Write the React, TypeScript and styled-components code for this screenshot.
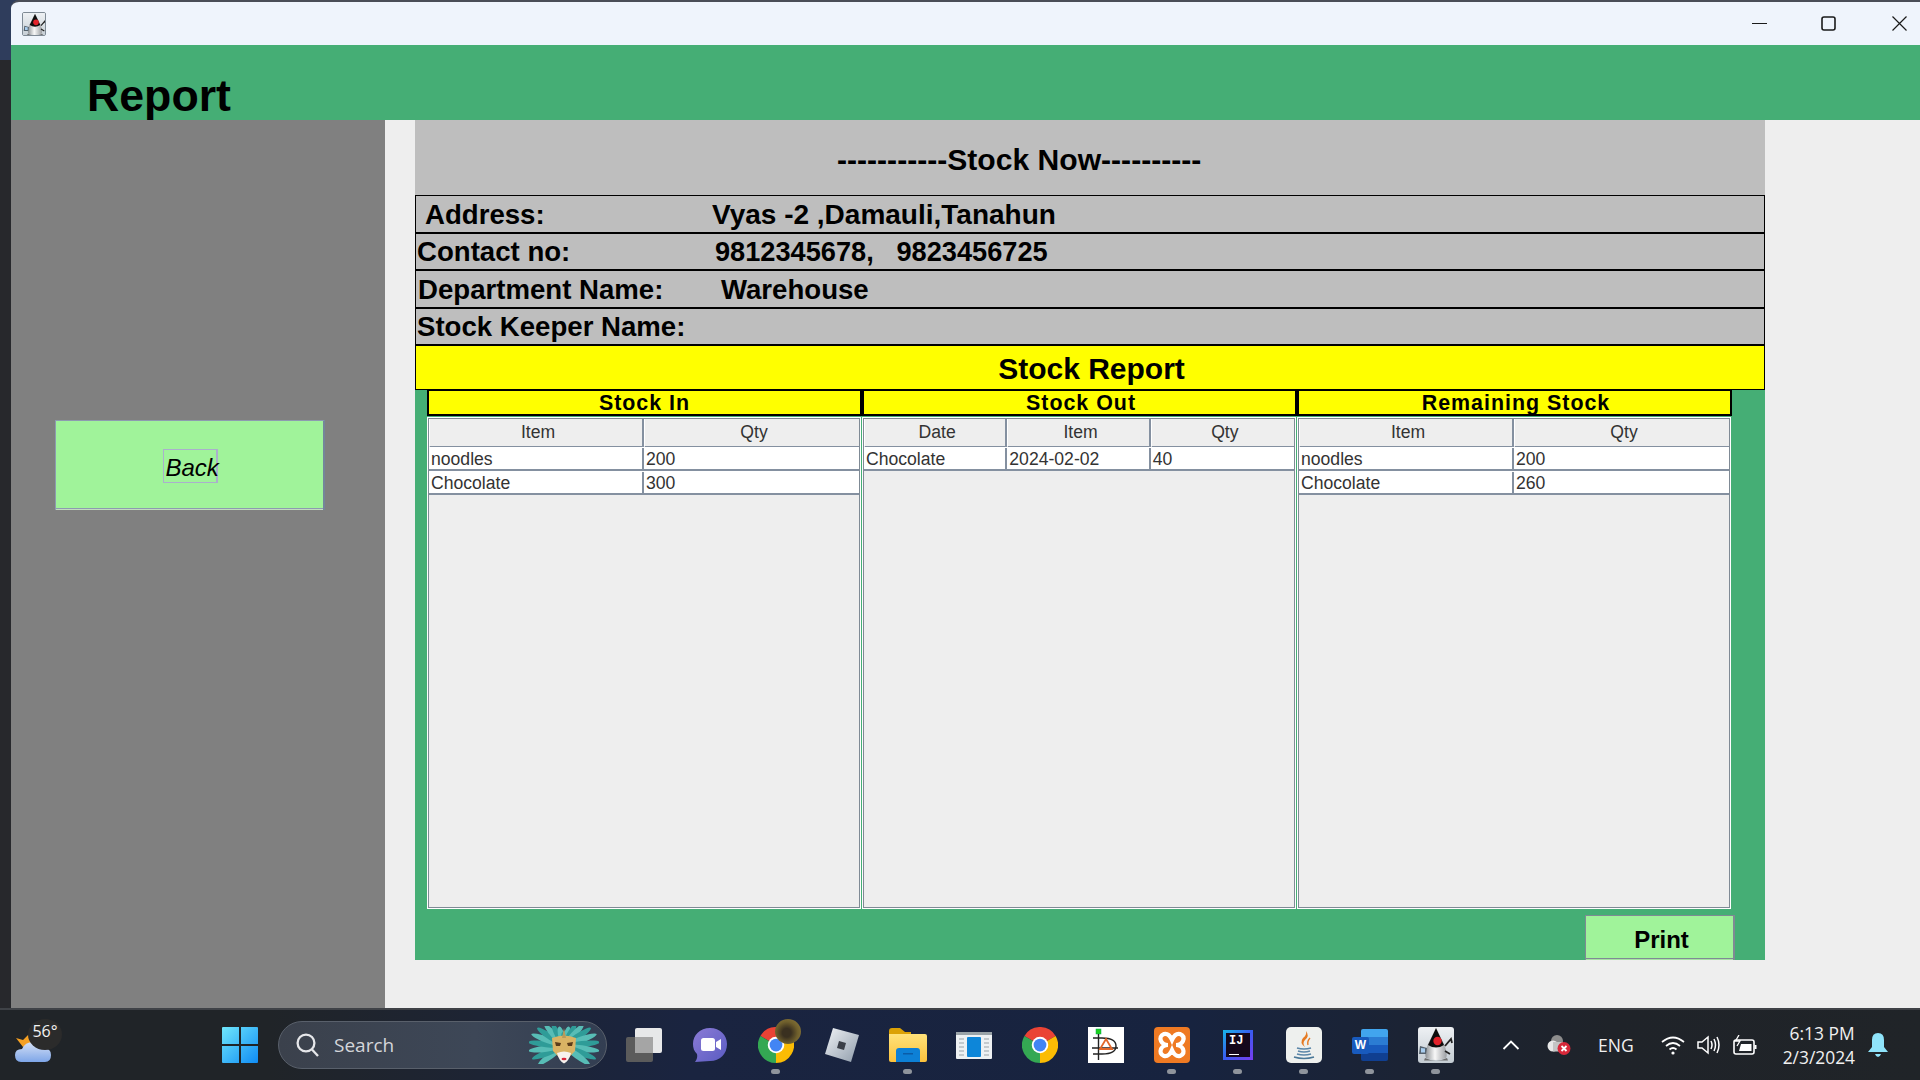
import React from "react";
import styled, { createGlobalStyle } from "styled-components";

const Global = createGlobalStyle`
  html, body { margin: 0; padding: 0; overflow: hidden; background: #26272b; }
  #root { width: 1920px; height: 1080px; }
  * { box-sizing: border-box; }
`;

const Screen = styled.div`
  width: 1920px; height: 1080px; display: flex; flex-direction: column;
  font-family: "Liberation Sans", Arial, sans-serif; overflow: hidden;
`;
const Desktop = styled.div`
  height: 1008px; padding-left: 11px; display: flex;
  background: linear-gradient(#2f3d5c 0 60px, #27282c 60px);
`;
const Window = styled.div`
  flex: 1; display: flex; flex-direction: column; min-width: 0;
  border-top: 2px solid #4a4d57; border-top-left-radius: 8px; overflow: hidden;
`;
const TitleBar = styled.div`
  height: 43px; flex: none; background: #eff4fc; display: flex; align-items: center;
  padding-left: 11px; padding-bottom: 0;
`;
const TitleIcon = styled.div`
  width: 24px; height: 24px; border: 1px solid #7f8a95; border-radius: 2px; overflow: hidden;
`;
const Controls = styled.div`
  margin-left: auto; display: flex; align-items: center; padding-right: 13px; padding-bottom: 1px;
`;
const ControlIcon = styled.svg<{ $gap: number }>`
  width: 15px; height: 15px; margin-left: ${p => p.$gap}px; display: block;
  stroke: #1a1a1a; fill: none; stroke-width: 1.2;
`;
const Header = styled.header`
  height: 75px; flex: none; background: #45ae75; overflow: hidden; padding: 25px 0 0 76px;
`;
const PageTitle = styled.h1`
  margin: 0; font-size: 44.7px; line-height: 51px; font-weight: 700; color: #000;
`;
const Body = styled.div`
  flex: 1; display: flex; background: #eeeeee; min-height: 0;
`;
const Sidebar = styled.aside`
  width: 374px; flex: none; background: #808080; padding: 300px 0 0 44px;
`;
const BackButton = styled.button`
  width: 270px; height: 90px; padding: 0; background: #a0f39a; display: flex;
  align-items: center; justify-content: center; cursor: pointer;
  border: 1px solid #8d9bb0; border-right: 2px solid #75859a; border-bottom: 0;
  box-shadow: inset 0 -1px 0 #c2dcbf, inset 0 -2px 0 #8d9bb0;
`;
const BackLabel = styled.span`
  display: block; width: 55px; height: 34px; border: 1px solid #aab0cc; border-right-width: 2px;
  font: italic 400 24px/35px "Liberation Sans", Arial, sans-serif; color: #000;
  padding-left: 2px; white-space: nowrap; margin-left: 1px; margin-bottom: 0;
`;
const Content = styled.main`
  flex: 1; padding-left: 30px;
`;
const Panel = styled.section`
  width: 1350px; height: 840px; background: #45ae75; display: flex; flex-direction: column;
`;
const PanelTitle = styled.div`
  height: 75px; background: #bebebe; padding: 23px 0 0 422px;
  font-size: 30.1px; line-height: 34px; font-weight: 700; color: #000; white-space: nowrap;
`;
const InfoRow = styled.div`
  height: 37.5px; border: 1px solid #000; background: #bebebe; display: flex; align-items: center;
  padding-top: 2px; font-size: 27.6px; font-weight: 700; color: #000; white-space: nowrap;
`;
const InfoLabel = styled.span<{ $pad: number; $width: number }>`
  width: ${p => p.$width}px; padding-left: ${p => p.$pad}px; flex: none;
`;
const InfoValue = styled.span<{ $size: number }>`
  font-size: ${p => p.$size}px;
`;
const ReportBar = styled.div`
  height: 45px; border: 1px solid #000; background: #ffff00; text-align: center; padding-left: 3px;
  font-size: 30px; line-height: 46px; font-weight: 700; color: #000;
`;
const StockGrid = styled.div`
  height: 520px; margin: 0 33px 0 12px; display: grid; grid-template-columns: repeat(3, 435px);
`;
const StockColumn = styled.div`
  display: flex; flex-direction: column; min-height: 0;
`;
const ColumnHead = styled.div<{ $nudge: number }>`
  height: 26px; flex: none; background: #ffff00; border: 2px solid #000; border-top-width: 1px;
  padding-left: ${p => p.$nudge}px; margin-right: 0;
  text-align: center; font-size: 21.4px; line-height: 24px; font-weight: 700; letter-spacing: 1px; color: #000;
`;
const TableBox = styled.div`
  flex: 1; margin: 2px 2px 2px 1px; background: #eeeeee; border: 1px solid #7f8a95;
  box-shadow: 0 0 0 1px #fff; display: flex; flex-direction: column;
`;
const HeadRow = styled.div<{ $cols: number }>`
  height: 28px; flex: none; display: grid; grid-template-columns: repeat(${p => p.$cols}, 1fr);
`;
const HeadCell = styled.div`
  text-align: center; font-size: 17.6px; line-height: 27px; color: #333; padding-left: 4px;
  border-bottom: 2px solid #8490a0; border-right: 2px solid #8490a0; border-left: 1px solid #fff;
  &:last-child { border-right: 0; }
`;
const DataRow = styled.div<{ $cols: number }>`
  height: 24px; flex: none; display: grid; grid-template-columns: repeat(${p => p.$cols}, 1fr);
  background: #fff; border-top: 1px solid #fff; border-bottom: 2px solid #8490a0;
`;
const DataCell = styled.div`
  padding-left: 2px; font-size: 17.6px; line-height: 23px; color: #333; white-space: nowrap;
  border-right: 2px solid #8490a0;
  &:last-child { border-right: 0; }
`;
const Footer = styled.div`
  flex: 1; display: flex; justify-content: flex-end; padding: 5px 30px 0 0;
`;
const PrintButton = styled.button`
  width: 150px; height: 45px; background: #a0f39a; padding: 4px 0 0 4px; cursor: pointer;
  border: 1px solid #7f8a95; border-right-width: 2px; border-bottom: 0;
  box-shadow: inset 0 -1px 0 #a8e0a4, inset 0 -2px 0 #7f8a95;
  font: 700 24px/30px "Liberation Sans", Arial, sans-serif; color: #000;
`;

const Taskbar = styled.footer`
  height: 72px; flex: none; display: flex; align-items: center; position: relative;
  border-top: 2px solid #3f4247;
  background: linear-gradient(90deg, #202428 0%, #202428 14%, #1a2440 36%, #17233f 62%, #1f2329 84%, #202428 100%);
`;
const WeatherBlock = styled.div`
  width: 207px; flex: none; padding-left: 15px; position: relative; display: flex; align-items: center;
`;
const WeatherBadge = styled.span`
  position: absolute; left: 28px; top: -8px; width: 34px; height: 31px; border-radius: 50%;
  background: #2b2b2b; color: #f2f2f2; text-align: center;
  font: 400 16px/24px "Open Sans", sans-serif;
`;
const AppSlot = styled.div<{ $running?: boolean }>`
  width: 66px; height: 70px; flex: none; display: flex; align-items: center; justify-content: center;
  position: relative;
  ${p => p.$running ? `&::after { content: ""; position: absolute; left: 28px; bottom: 6px; width: 9px; height: 5px; border-radius: 3px; background: #8f949c; }` : ""}
`;
const SearchBox = styled.div`
  width: 329px; height: 48px; flex: none; margin: 0 4px 0 5px; border-radius: 24px;
  background: linear-gradient(90deg, #3b414c, #3d4757 60%, #333e52);
  border: 1px solid #59606b; display: flex; align-items: center; padding-left: 17px;
`;
const SearchText = styled.span`
  margin-left: 14px; font: 400 19px/24px "Open Sans", sans-serif; color: #d4d6da;
`;
const SearchArt = styled.div`
  margin-left: auto; margin-right: 7px; display: flex;
`;
const Avatar = styled.span`
  position: absolute; left: 32px; top: 9px; width: 26px; height: 25px; border-radius: 50%;
  background: radial-gradient(circle at 45% 55%, #3a3020 0 22%, #6f5f2c 55%, #94803f 100%);
`;
const TrayItem = styled.div<{ $gap: number }>`
  margin-left: ${p => p.$gap}px; flex: none; display: flex; align-items: center;
`;
const TrayText = styled.span`
  font: 400 17.5px/24px "Open Sans", sans-serif; color: #f0f0f0;
`;
const Clock = styled.div`
  width: 72px; text-align: right; font: 400 17.4px/24px "Open Sans", sans-serif; color: #f0f0f0; white-space: nowrap;
`;

const Duke: React.FC<{ size: number }> = ({ size }) => (
  <svg width={size} height={size} viewBox="0 0 36 36" style={{ display: "block", borderRadius: size > 30 ? 3 : 0 }}>
    <defs>
      <linearGradient id={`dk${size}`} x1="0" y1="0" x2="0" y2="1">
        <stop offset="0" stopColor="#eef1f4" /><stop offset="1" stopColor="#c4ccd3" />
      </linearGradient>
      <linearGradient id={`db${size}`} x1="0" y1="0" x2="1" y2="0">
        <stop offset="0" stopColor="#8d9195" /><stop offset=".45" stopColor="#f8f8f8" /><stop offset="1" stopColor="#9a9da1" />
      </linearGradient>
    </defs>
    <rect width="36" height="36" fill={`url(#dk${size})`} />
    <path d="M18 1 L10 17 Q6 27 8 31 Q18 35 28 31 Q30 27 26 17 Z" fill={`url(#db${size})`} />
    <path d="M18 1 L10 18 Q18 23 26 18 Z" fill="#0e0e0e" />
    <circle cx="19.5" cy="14" r="4.2" fill="#e3222a" />
    <path d="M9 21 L2 19 L1 27 L8 27 Z" fill="#56636f" />
    <path d="M3 21 L7 21.5 L7 25.5 L3 25.5 Z" fill="#a9cdee" />
    <path d="M27 19 L33 12 L34 16 M27 24 L32 27" stroke="#222" strokeWidth="1.8" fill="none" />
    <path d="M7 31 Q18 36 29 31 L30 33.5 L6 33.5 Z" fill="#6d6d6d" />
  </svg>
);

const WeatherIcon = () => (
  <svg width="36" height="36" viewBox="0 0 36 36" style={{ display: "block" }}>
    <defs>
      <linearGradient id="cloud" x1="0" y1="0" x2="0" y2="1">
        <stop offset="0" stopColor="#d5e0f6" /><stop offset="1" stopColor="#7ea6e8" />
      </linearGradient>
    </defs>
    <path d="M1 11 L8 13 L14 7 L16 16 L8 20 Z" fill="#f5a023" />
    <path d="M6 35 Q0 35 0 28 Q0 22 7 22 Q10 15 18 15 Q26 15 28 21 Q36 21 36 28 Q36 35 30 35 Z" fill="url(#cloud)" />
  </svg>
);

const StartIcon = () => (
  <svg width="36" height="36" viewBox="0 0 36 36" style={{ display: "block" }}>
    <defs>
      <linearGradient id="win" x1="0" y1="0" x2="1" y2="1">
        <stop offset="0" stopColor="#6fe6fb" /><stop offset="1" stopColor="#0f8cf5" />
      </linearGradient>
    </defs>
    <path d="M1 0H17V17H0V1a1 1 0 0 1 1-1ZM19 0H35a1 1 0 0 1 1 1V17H19ZM0 19H17V36H1a1 1 0 0 1-1-1ZM19 19H36V35a1 1 0 0 1-1 1H19Z" fill="url(#win)" />
  </svg>
);

const SearchGlyph = () => (
  <svg width="24" height="26" viewBox="0 0 24 26" fill="none" stroke="#e6e7ea" strokeWidth="2.3" style={{ display: "block" }}>
    <circle cx="10" cy="11" r="8.4" /><path d="M16 17.5 L22 24" />
  </svg>
);

const feathers = Array.from({ length: 19 }, (_, i) => -126 + i * 14);

const MaskArt = () => (
  <svg width="70" height="38" viewBox="0 0 70 38" style={{ display: "block" }}>
    {feathers.map((a, i) => {
      const len = 13 + 21 * Math.abs(Math.sin((a * Math.PI) / 180));
      return (
        <ellipse key={a} cx="35" cy={20 - len / 2 - 1} rx="3.2" ry={len / 2 + 1}
          fill={i % 2 ? "#2f9c98" : "#58bdb6"} transform={`rotate(${a} 35 20)`} />
      );
    })}
    <path d="M23 12 Q35 7 47 12 L46 25 Q41 30 35 37 Q29 30 24 25 Z" fill="#d9b364" />
    <path d="M26 16 L32 17 L31 20 L27 20 Z M44 16 L38 17 L39 20 L43 20 Z" fill="#5b3c1a" />
    <path d="M28 27 Q35 24 42 27 Q40 35 35 37.5 Q30 35 28 27 Z" fill="#f6f2ee" />
    <ellipse cx="35" cy="33" rx="2.5" ry="1.2" fill="#d8263a" />
    <path d="M33 12 L35 2 L37 12 Z" fill="#b89a5a" />
  </svg>
);

const TaskViewIcon = () => (
  <svg width="36" height="36" viewBox="0 0 36 36" style={{ display: "block" }}>
    <rect x="0" y="10" width="27" height="25" rx="2" fill="#5b5b5b" />
    <rect x="9" y="1" width="27" height="25" rx="2" fill="#f4f4f4" opacity=".94" />
    <rect x="9" y="10" width="18" height="16" fill="#a5a5a5" />
  </svg>
);

const TeamsIcon = () => (
  <svg width="36" height="36" viewBox="0 0 36 36" style={{ display: "block" }}>
    <defs>
      <linearGradient id="tm" x1="0" y1="0" x2="1" y2="1">
        <stop offset="0" stopColor="#8b7bd6" /><stop offset="1" stopColor="#5a5cc2" />
      </linearGradient>
    </defs>
    <path d="M18 1 C28 1 35 8 35 17 C35 27 28 34 18 34 L3 35 Q6 31 5 27 C2 24 1 21 1 17 C1 8 8 1 18 1 Z" fill="url(#tm)" />
    <rect x="9" y="11" width="14" height="13" rx="2.5" fill="#fff" />
    <path d="M24 15 L29 12 V23 L24 20 Z" fill="#fff" />
  </svg>
);

const ChromeIcon = () => (
  <svg width="36" height="36" viewBox="0 0 48 48" style={{ display: "block" }}>
    <path d="M24 24 L3.2 12 A24 24 0 0 1 44.8 12 Z" fill="#ea4335" />
    <path d="M24 24 L44.8 12 A24 24 0 0 1 24 48 Z" fill="#fbbc04" />
    <path d="M24 24 L24 48 A24 24 0 0 1 3.2 12 Z" fill="#34a853" />
    <circle cx="24" cy="24" r="11" fill="#fff" />
    <circle cx="24" cy="24" r="8.5" fill="#4285f4" />
  </svg>
);

const RobloxIcon = () => (
  <svg width="36" height="36" viewBox="0 0 36 36" style={{ display: "block" }}>
    <defs>
      <linearGradient id="rb" x1="0" y1="0" x2="1" y2="1">
        <stop offset="0" stopColor="#f0f3f6" /><stop offset="1" stopColor="#8f9cab" />
      </linearGradient>
    </defs>
    <path d="M9 1 L35 8 L27 35 L1 27 Z" fill="url(#rb)" />
    <path d="M15 14 L22 16 L20 23 L13 21 Z" fill="#3a3f48" />
  </svg>
);

const FilesIcon = () => (
  <svg width="38" height="34" viewBox="0 0 38 34" style={{ display: "block" }}>
    <defs>
      <linearGradient id="fd" x1="0" y1="0" x2="0" y2="1">
        <stop offset="0" stopColor="#ffe27a" /><stop offset="1" stopColor="#fcc23c" />
      </linearGradient>
    </defs>
    <path d="M0 3 Q0 0 3 0 H11 L16 4 H22 V10 H0 Z" fill="#dba106" />
    <path d="M0 6 H36 Q38 6 38 8 V32 Q38 34 36 34 H2 Q0 34 0 32 Z" fill="url(#fd)" />
    <path d="M7 34 V23 Q7 20 10 20 H28 Q31 20 31 23 V34 Z" fill="#0d80d6" />
    <rect x="14" y="25" width="10" height="1.5" fill="#0a5ca8" />
  </svg>
);

const StoreWindowIcon = () => (
  <svg width="36" height="27" viewBox="0 0 36 27" style={{ display: "block" }}>
    <rect width="36" height="27" rx="1" fill="#eef1f3" />
    <rect width="36" height="3" fill="#9aa3a8" />
    <rect x="11" y="5" width="14" height="20" rx="1" fill="#0d86d9" />
    {[6, 10, 14, 18, 22].map(y => (
      <g key={y}>
        <rect x="3" y={y} width="5" height="2" fill="#c4cace" />
        <rect x="28" y={y} width="5" height="2" fill="#c4cace" />
      </g>
    ))}
  </svg>
);

const DesignIcon = () => (
  <svg width="36" height="36" viewBox="0 0 36 36" style={{ display: "block" }}>
    <rect width="36" height="36" fill="#fff" />
    <rect x="8" y="2" width="5" height="5" fill="#1ed01e" stroke="#0a5" strokeWidth=".5" />
    <path d="M10.5 7 V33 M5 11 H14 Q28 11 28 19 Q28 27 14 27 H5 M4 21 H30" fill="none" stroke="#222" strokeWidth="1.4" />
    <path d="M18 12 L24 22 H12 Z" fill="none" stroke="#e2682a" strokeWidth="1.8" />
  </svg>
);

const XamppIcon = () => (
  <svg width="36" height="36" viewBox="0 0 36 36" style={{ display: "block" }}>
    <rect width="36" height="36" rx="4" fill="#ef7a23" />
    <path d="M18 13 Q15 6 10 7 Q5 9 7 14 Q9 18 14 18 Q9 18 7 22 Q5 27 10 29 Q15 30 18 23 Q21 30 26 29 Q31 27 29 22 Q27 18 22 18 Q27 18 29 14 Q31 9 26 7 Q21 6 18 13 Z" fill="none" stroke="#fff" strokeWidth="4.2" />
  </svg>
);

const IdeaBox = styled.div`
  width: 30px; height: 30px; padding: 3px; background: linear-gradient(135deg, #17b7e8, #3a5bf0 50%, #7a3cf0);
  display: flex;
`;
const IdeaInner = styled.div`
  flex: 1; background: #14081c; color: #fff; font: 700 12px/13px "Liberation Mono", monospace; padding: 2px 0 2px 3px;
  display: flex; flex-direction: column; justify-content: space-between;
`;
const IdeaBar = styled.span`
  display: block; width: 10px; height: 1.5px; background: #fff;
`;

const JavaIcon = () => (
  <svg width="36" height="36" viewBox="0 0 36 36" style={{ display: "block" }}>
    <rect width="36" height="36" rx="5" fill="#eef0ee" />
    <path d="M20 4 Q24 9 19 13 Q16 16 19 20 Q13 16 17 11 Q21 8 20 4 Z" fill="#e67a22" />
    <path d="M24 11 Q21 14 22 18" stroke="#e67a22" strokeWidth="1.4" fill="none" />
    <path d="M11 21 Q18 23 25 21 M12 24 Q18 26 24 24 M11 27 Q18 29 25 27" stroke="#5b86a8" strokeWidth="1.6" fill="none" />
    <path d="M8 30 Q18 33 28 30" stroke="#4a7898" strokeWidth="1.6" fill="none" />
  </svg>
);

const WordStack = styled.div`
  width: 36px; height: 32px; position: relative; display: flex; justify-content: flex-end;
`;
const WordBack = styled.div`
  width: 27px; height: 32px; border-radius: 2px;
  background: linear-gradient(#41a5ee 0 25%, #2b7cd3 25% 50%, #185abd 50% 75%, #103f91 75%);
`;
const WordBadge = styled.span`
  position: absolute; left: 0; top: 8px; width: 17px; height: 17px; background: #185abd; border-radius: 2px;
  color: #fff; text-align: center; font: 700 12px/17px "Liberation Sans", sans-serif;
`;

const Chevron = () => (
  <svg width="18" height="10" viewBox="0 0 18 10" fill="none" stroke="#fff" strokeWidth="1.8" style={{ display: "block" }}>
    <path d="M1.5 9 L9 1.5 L16.5 9" />
  </svg>
);
const OneDriveOff = () => (
  <svg width="24" height="20" viewBox="0 0 24 20" style={{ display: "block" }}>
    <circle cx="10" cy="6" r="6" fill="#8d8d8d" />
    <circle cx="6" cy="11" r="5.5" fill="#e8e8e8" />
    <rect x="6" y="7" width="10" height="9.5" fill="#c4c4c4" />
    <circle cx="17" cy="13.5" r="6.5" fill="#d8283a" />
    <path d="M14.5 11 L19.5 16 M19.5 11 L14.5 16" stroke="#fff" strokeWidth="1.8" />
  </svg>
);
const Wifi = () => (
  <svg width="24" height="20" viewBox="0 0 24 20" fill="none" stroke="#fff" strokeWidth="1.7" style={{ display: "block" }}>
    <path d="M1 7 Q12 -2 23 7 M5 11 Q12 5 19 11 M8.5 14.5 Q12 11.5 15.5 14.5" />
    <circle cx="12" cy="18" r="1.6" fill="#fff" stroke="none" />
  </svg>
);
const Speaker = () => (
  <svg width="24" height="20" viewBox="0 0 24 20" fill="none" stroke="#fff" strokeWidth="1.5" style={{ display: "block" }}>
    <path d="M1 7 H5 L11 2 V18 L5 13 H1 Z" />
    <path d="M14 6 Q16 10 14 14 M17 4 Q20 10 17 16 M20 2 Q24 10 20 18" />
  </svg>
);
const Battery = () => (
  <svg width="24" height="20" viewBox="0 0 24 20" fill="none" stroke="#fff" strokeWidth="1.6" style={{ display: "block" }}>
    <rect x="1" y="5" width="20" height="14" rx="2" />
    <path d="M3.5 9 H8 L6 16 H18.5 V9 H9" fill="#fff" stroke="none" />
    <path d="M22.5 10 V14" strokeWidth="2" />
    <path d="M6 0 L2.5 6 H7 L4 11" strokeWidth="1.3" stroke="#fff" />
  </svg>
);
const Bell = () => (
  <svg width="20" height="24" viewBox="0 0 20 24" style={{ display: "block" }}>
    <path d="M10 0 Q16 0 16 7 V14 L20 19 H0 L4 14 V7 Q4 0 10 0 Z" fill="#8fe4fb" />
    <path d="M7 21 H13 Q12 24 10 24 Q8 24 7 21 Z" fill="#8fe4fb" />
  </svg>
);

type Col = { title: string; heads: string[]; rows: string[][]; nudge: number };
const columns: Col[] = [
  { title: "Stock In", heads: ["Item", "Qty"], rows: [["noodles", "200"], ["Chocolate", "300"]], nudge: 0 },
  { title: "Stock Out", heads: ["Date", "Item", "Qty"], rows: [["Chocolate", "2024-02-02", "40"]], nudge: 3 },
  { title: "Remaining Stock", heads: ["Item", "Qty"], rows: [["noodles", "200"], ["Chocolate", "260"]], nudge: 3 },
];

export default function App() {
  return (
    <Screen>
      <Global />
      <Desktop>
        <Window>
          <TitleBar>
            <TitleIcon><Duke size={24} /></TitleIcon>
            <Controls>
              <ControlIcon $gap={0} viewBox="0 0 15 15"><path d="M0 7.5 H15" /></ControlIcon>
              <ControlIcon $gap={54} viewBox="0 0 15 15" style={{ strokeWidth: 1.6 }}><rect x="1" y="1" width="13" height="13" rx="2" /></ControlIcon>
              <ControlIcon $gap={56} viewBox="0 0 15 15"><path d="M0.5 0.5 L14.5 14.5 M14.5 0.5 L0.5 14.5" /></ControlIcon>
            </Controls>
          </TitleBar>
          <Header><PageTitle>Report</PageTitle></Header>
          <Body>
            <Sidebar><BackButton><BackLabel>Back</BackLabel></BackButton></Sidebar>
            <Content>
              <Panel>
                <PanelTitle>-----------Stock Now----------</PanelTitle>
                <InfoRow><InfoLabel $pad={9} $width={296}>Address:</InfoLabel><InfoValue $size={28}>Vyas -2 ,Damauli,Tanahun</InfoValue></InfoRow>
                <InfoRow><InfoLabel $pad={1} $width={299}>Contact no:</InfoLabel><InfoValue $size={27.2}>9812345678,&nbsp;&nbsp; 9823456725</InfoValue></InfoRow>
                <InfoRow><InfoLabel $pad={2} $width={305}>Department Name:</InfoLabel><InfoValue $size={27.6}>Warehouse</InfoValue></InfoRow>
                <InfoRow><InfoLabel $pad={1} $width={300}>Stock Keeper Name:</InfoLabel></InfoRow>
                <ReportBar>Stock Report</ReportBar>
                <StockGrid>
                  {columns.map(c => (
                    <StockColumn key={c.title}>
                      <ColumnHead $nudge={c.nudge}>{c.title}</ColumnHead>
                      <TableBox>
                        <HeadRow $cols={c.heads.length}>
                          {c.heads.map(h => <HeadCell key={h}>{h}</HeadCell>)}
                        </HeadRow>
                        {c.rows.map(r => (
                          <DataRow key={r[0]} $cols={r.length}>
                            {r.map(v => <DataCell key={v}>{v}</DataCell>)}
                          </DataRow>
                        ))}
                      </TableBox>
                    </StockColumn>
                  ))}
                </StockGrid>
                <Footer><PrintButton>Print</PrintButton></Footer>
              </Panel>
            </Content>
          </Body>
        </Window>
      </Desktop>
      <Taskbar>
        <WeatherBlock>
          <WeatherIcon />
          <WeatherBadge>56°</WeatherBadge>
        </WeatherBlock>
        <AppSlot><StartIcon /></AppSlot>
        <SearchBox>
          <SearchGlyph />
          <SearchText>Search</SearchText>
          <SearchArt><MaskArt /></SearchArt>
        </SearchBox>
        <AppSlot><TaskViewIcon /></AppSlot>
        <AppSlot><TeamsIcon /></AppSlot>
        <AppSlot $running><ChromeIcon /><Avatar /></AppSlot>
        <AppSlot><RobloxIcon /></AppSlot>
        <AppSlot $running><FilesIcon /></AppSlot>
        <AppSlot><StoreWindowIcon /></AppSlot>
        <AppSlot><ChromeIcon /></AppSlot>
        <AppSlot><DesignIcon /></AppSlot>
        <AppSlot $running><XamppIcon /></AppSlot>
        <AppSlot $running>
          <IdeaBox><IdeaInner>IJ<IdeaBar /></IdeaInner></IdeaBox>
        </AppSlot>
        <AppSlot $running><JavaIcon /></AppSlot>
        <AppSlot $running>
          <WordStack><WordBack /><WordBadge>W</WordBadge></WordStack>
        </AppSlot>
        <AppSlot $running><Duke size={36} /></AppSlot>
        <TrayItem $gap={33}><Chevron /></TrayItem>
        <TrayItem $gap={27}><OneDriveOff /></TrayItem>
        <TrayItem $gap={27}><TrayText>ENG</TrayText></TrayItem>
        <TrayItem $gap={27}><Wifi /></TrayItem>
        <TrayItem $gap={12}><Speaker /></TrayItem>
        <TrayItem $gap={12}><Battery /></TrayItem>
        <TrayItem $gap={26}><Clock>6:13 PM<br />2/3/2024</Clock></TrayItem>
        <TrayItem $gap={13}><Bell /></TrayItem>
      </Taskbar>
    </Screen>
  );
}
